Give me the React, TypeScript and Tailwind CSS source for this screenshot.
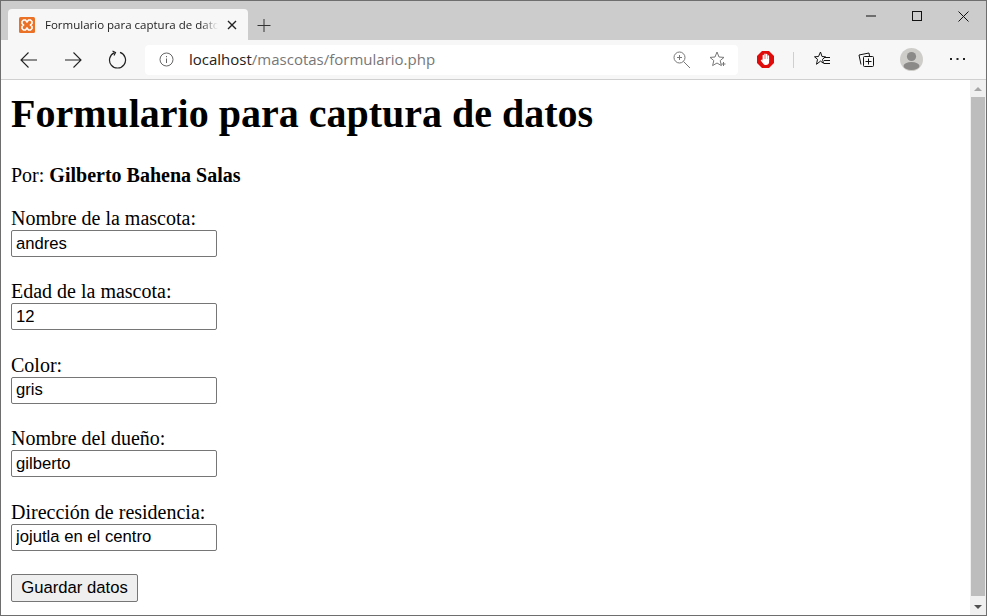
import React from 'react';

const fields = [
  { label: 'Nombre de la mascota:', value: 'andres' },
  { label: 'Edad de la mascota:', value: '12' },
  { label: 'Color:', value: 'gris' },
  { label: 'Nombre del dueño:', value: 'gilberto' },
  { label: 'Dirección de residencia:', value: 'jojutla en el centro' },
];

const TabBar = () => (
  <div className="flex h-[39px] shrink-0 bg-[#cccccc]">
    {/* Tab */}
    <div className="ml-[7px] mt-[8px] flex h-[31px] w-[240px] items-center rounded-t-[4px] bg-[#f7f7f7] pl-[11px]">
      <svg className="h-[16px] w-[16px] shrink-0" viewBox="0 0 16 16">
        <rect width="16" height="16" rx="1.5" fill="#ea7125" />
        <path d="M4.500 3h2L8 5l1.500-2h2L13 4.500v2L11.500 8 13 9.500v2L11.500 13h-2L8 11l-1.500 2h-2L3 11.500v-2L4.500 8 3 6.500v-2z" fill="none" stroke="#fff" strokeWidth="1.600" />
      </svg>
      <span className="ml-[10px] w-[173px] overflow-hidden whitespace-nowrap font-['Open_Sans',sans-serif] text-[11.500px] text-[#222] [mask-image:linear-gradient(to_right,black_90%,transparent)]">
        Formulario para captura de datos
      </span>
      <svg className="ml-[9px] h-[10px] w-[10px] shrink-0" viewBox="0 0 10 10">
        <path d="M1 1l8 8M9 1l-8 8" stroke="#222" strokeWidth="1.400" />
      </svg>
    </div>
    <svg className="ml-[9px] mt-[18px] h-[14px] w-[14px]" viewBox="0 0 14 14">
      <path d="M7 0v13M.5 6.500h13" stroke="#333" strokeWidth="1" />
    </svg>
    {/* Window controls */}
    <div className="ml-auto flex h-[30px] items-center">
      <svg className="mr-[36px] h-[10px] w-[10px]" viewBox="0 0 10 10">
        <path d="M0 5h10" stroke="#111" strokeWidth="1" />
      </svg>
      <svg className="mr-[36px] h-[10px] w-[10px]" viewBox="0 0 10 10">
        <rect x=".5" y=".5" width="9" height="9" fill="none" stroke="#111" strokeWidth="1" />
      </svg>
      <svg className="mr-[17px] h-[11px] w-[11px]" viewBox="0 0 11 11">
        <path d="M.5.500l10 10M10.500.500l-10 10" stroke="#111" strokeWidth="1" />
      </svg>
    </div>
  </div>
);

const Toolbar = () => (
  <div className="flex h-[40px] shrink-0 items-center border-b border-[#d0d0d0] bg-[#f7f7f7]">
    <svg className="ml-[19px] h-[18px] w-[18px]" viewBox="0 0 18 18" fill="none" stroke="#222" strokeWidth="1.100">
      <path d="M17 9H1.500M8.500 1.500L1 9l7.500 7.500" />
    </svg>
    <svg className="ml-[26px] h-[18px] w-[18px]" viewBox="0 0 18 18" fill="none" stroke="#222" strokeWidth="1.100">
      <path d="M1 9h15.500M9.500 1.500L17 9l-7.500 7.500" />
    </svg>
    <svg className="ml-[26px] h-[19px] w-[19px]" viewBox="0 0 19 19" fill="none" stroke="#222" strokeWidth="1.200">
      <path d="M6.500 2.600A8 8 0 1 0 12 2.400" />
      <path d="M4.500 1l3 1.500-1.500 3" />
    </svg>
    {/* Address bar */}
    <div className="ml-[18px] flex h-[30px] w-[593px] items-center rounded-[4px] bg-white">
      <svg className="ml-[14px] h-[15px] w-[15px]" viewBox="0 0 15 15" fill="none" stroke="#666" strokeWidth="1">
        <circle cx="7.500" cy="7.500" r="6.500" />
        <path d="M7.500 6.500v4.500M7.500 4v1.200" />
      </svg>
      <span className="ml-[15px] font-['Open_Sans',sans-serif] text-[15px] text-[#777]">
        <span className="text-[#222]">localhost</span>/mascotas/formulario.php
      </span>
      <svg className="ml-auto h-[18px] w-[18px]" viewBox="0 0 18 18" fill="none" stroke="#777" strokeWidth="1">
        <circle cx="6.500" cy="6.500" r="5.500" />
        <path d="M10.500 10.500L17 17M4 6.500h5M6.500 4v5" />
      </svg>
      <svg className="ml-[18px] mr-[12px] h-[17px] w-[17px]" viewBox="0 0 17 17" fill="none" stroke="#777" strokeWidth="1">
        <path d="M8 1l2 5 5 .400-3.800 3.200 1.200 5L8 12 3.600 14.600l1.200-5L1 6.400 6 6z" />
        <path d="M12.500 13h4M14.500 11v4" />
      </svg>
    </div>
    {/* Extensions */}
    <svg className="ml-[19px] h-[17px] w-[17px]" viewBox="0 0 17 17">
      <path d="M5 0h7l5 5v7l-5 5H5l-5-5V5z" fill="#e00b0b" />
      <path d="M6.300 9V4.500M8 9V3.300M9.700 9V3.500M11.400 9V5" stroke="#fff" strokeWidth="1.400" strokeLinecap="round" fill="none" />
      <path d="M5.600 8h6.500v3c0 1.800-1.300 3-3.200 3-1.500 0-2.400-.7-3-1.800L3.900 9.700c-.4-.8.500-1.300 1.100-.7l.6.600z" fill="#fff" />
    </svg>
    <div className="ml-[19px] h-[16px] w-px bg-[#cfcfcf]" />
    <svg className="ml-[20px] h-[17px] w-[17px]" viewBox="0 0 17 17" fill="none" stroke="#111" strokeWidth="1">
      <path d="M6.500 1l1.500 4.500 3.500.300-3 2.500 1 4-3-2.200-4 3.200 1-5-3-2.500 4-.300z" />
      <path d="M10 6.500h6M10 9.500h6M10 12.500h6" />
    </svg>
    <svg className="ml-[27px] h-[17px] w-[17px]" viewBox="0 0 17 17" fill="none" stroke="#111" strokeWidth="1">
      <path d="M3 13.500L1 4l10-2 .500 3" />
      <rect x="5.500" y="5.500" width="10" height="10" rx="1" />
      <path d="M10.500 7.500v6M7.500 10.500h6" />
    </svg>
    <svg className="ml-[25px] h-[23px] w-[23px]" viewBox="0 0 23 23">
      <circle cx="11.500" cy="11.500" r="11.500" fill="#cfcdca" />
      <circle cx="11.500" cy="8.500" r="4.600" fill="#8c8a88" />
      <ellipse cx="11.500" cy="18" rx="8" ry="4" fill="#8c8a88" />
    </svg>
    <svg className="ml-[27px] h-[3px] w-[15px]" viewBox="0 0 15 3">
      <path d="M0 0h2v2H0zM6.500 0h2v2h-2zM13 0h2v2h-2z" fill="#222" />
    </svg>
  </div>
);

const Scrollbar = () => (
  <div className="flex w-[16px] shrink-0 flex-col items-center bg-[#f0f0f0]">
    <div className="mb-[6px] mt-[7px] h-0 w-0 border-x-[4px] border-b-[4px] border-x-transparent border-b-[#a6a6a6]" />
    <div className="min-h-0 w-[14px] flex-1 bg-[#bdbdbd]" />
    <div className="mb-[6px] mt-[9px] h-0 w-0 border-x-[4px] border-t-[4px] border-x-transparent border-t-[#505050]" />
  </div>
);

export default function App() {
  return (
    <div className="flex h-[616px] w-[987px] flex-col overflow-hidden border border-[#6e6e6e] bg-white">
      <TabBar />
      <Toolbar />
      <div className="flex min-h-0 flex-1">
        <div className="min-w-0 flex-1 pl-[10px] font-['Liberation_Serif',serif] text-[20px] leading-[23px] text-black">
          <h1 className="mt-[11px] text-[40px] font-bold leading-[46px]">Formulario para captura de datos</h1>
          <p className="mt-[27px] mb-[20px]">
            Por: <b>Gilberto Bahena Salas</b>
          </p>
          {fields.map((f) => (
            <div key={f.label} className="mb-[23.400px]">
              <div>{f.label}</div>
              <input
                readOnly
                value={f.value}
                className="block h-[27px] w-[206px] rounded-[2px] border border-[#767676] bg-white px-[4px] font-['Liberation_Sans',sans-serif] text-[16.670px] text-black outline-none"
              />
            </div>
          ))}
          <button className="h-[28px] w-[127px] rounded-[2px] border border-[#767676] bg-[#efefef] font-['Liberation_Sans',sans-serif] text-[16.670px] text-black">
            Guardar datos
          </button>
        </div>
        <Scrollbar />
      </div>
    </div>
  );
}
